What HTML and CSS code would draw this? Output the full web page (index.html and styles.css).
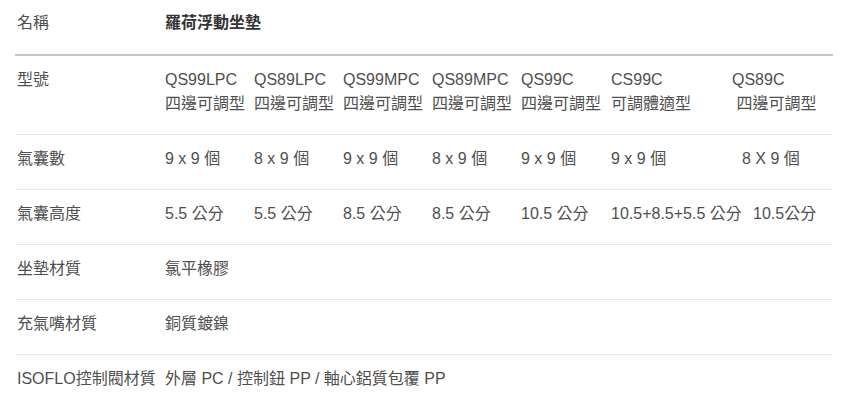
FILE: index.html
```html
<!DOCTYPE html>
<html lang="zh-Hant">
<head>
<meta charset="utf-8">
<title>羅荷浮動坐墊 規格</title>
<link rel="stylesheet" href="styles.css">
</head>
<body>
<div class="wrap">
<table class="spec">
  <thead>
    <tr>
      <th class="label">名稱</th>
      <th class="title">羅荷浮動坐墊</th>
    </tr>
  </thead>
  <tbody>
    <tr>
      <th class="label">型號</th>
      <td>
        <div class="cols">
          <span>QS99LPC<br>四邊可調型</span>
          <span>QS89LPC<br>四邊可調型</span>
          <span>QS99MPC<br>四邊可調型</span>
          <span>QS89MPC<br>四邊可調型</span>
          <span>QS99C<br>四邊可調型</span>
          <span>CS99C<br>可調體適型</span>
          <span>QS89C<br>&nbsp;四邊可調型</span>
        </div>
      </td>
    </tr>
    <tr>
      <th class="label">氣囊數</th>
      <td>
        <div class="cols">
          <span>9 x 9 個</span>
          <span>8 x 9 個</span>
          <span>9 x 9 個</span>
          <span>8 x 9 個</span>
          <span>9 x 9 個</span>
          <span>9 x 9 個</span>
          <span class="shift-a">8 X 9 個</span>
        </div>
      </td>
    </tr>
    <tr>
      <th class="label">氣囊高度</th>
      <td>
        <div class="cols">
          <span>5.5 公分</span>
          <span>5.5 公分</span>
          <span>8.5 公分</span>
          <span>8.5 公分</span>
          <span>10.5 公分</span>
          <span class="nowrap">10.5+8.5+5.5 公分</span>
          <span class="shift-b">10.5公分</span>
        </div>
      </td>
    </tr>
    <tr>
      <th class="label">坐墊材質</th>
      <td>氯平橡膠</td>
    </tr>
    <tr>
      <th class="label">充氣嘴材質</th>
      <td>銅質鍍鎳</td>
    </tr>
    <tr>
      <th class="label">ISOFLO控制閥材質</th>
      <td>外層 PC / 控制鈕 PP / 軸心鋁質包覆 PP</td>
    </tr>
  </tbody>
</table>
</div>
</body>
</html>
```
FILE: styles.css
```css
html, body {
  margin: 0;
  padding: 0;
  background: #ffffff;
}

body {
  font-family: "Liberation Sans", "Noto Sans CJK TC", Arial, sans-serif;
  font-size: 16px;
  line-height: 24px;
  color: #4f4f4f;
}

.wrap {
  padding: 0 11px 0 15px;
}

.spec {
  width: 100%;
  border-collapse: collapse;
  border-spacing: 0;
}

.spec th,
.spec td {
  text-align: left;
  vertical-align: top;
  padding: 12px 0 18px 0;
  border-top: 1px solid #e9e9e9;
  font-weight: normal;
}

.spec th.label {
  width: 148px;
  padding-left: 2px;
  white-space: nowrap;
}

.spec thead th {
  border-top: none;
  border-bottom: 2px solid #c6c6c6;
  padding-top: 11px;
  padding-bottom: 19px;
}

.spec thead th.title {
  font-weight: bold;
  color: #333333;
}

.spec thead + tbody tr:first-child th,
.spec thead + tbody tr:first-child td {
  border-top: none;
}

.cols {
  display: grid;
  grid-template-columns: 89px 89px 89px 89px 90px 121px auto;
}

.cols > span {
  white-space: nowrap;
}

.shift-a {
  padding-left: 10px;
}

.shift-b {
  padding-left: 21px;
}

.nowrap {
  white-space: nowrap;
}
```
